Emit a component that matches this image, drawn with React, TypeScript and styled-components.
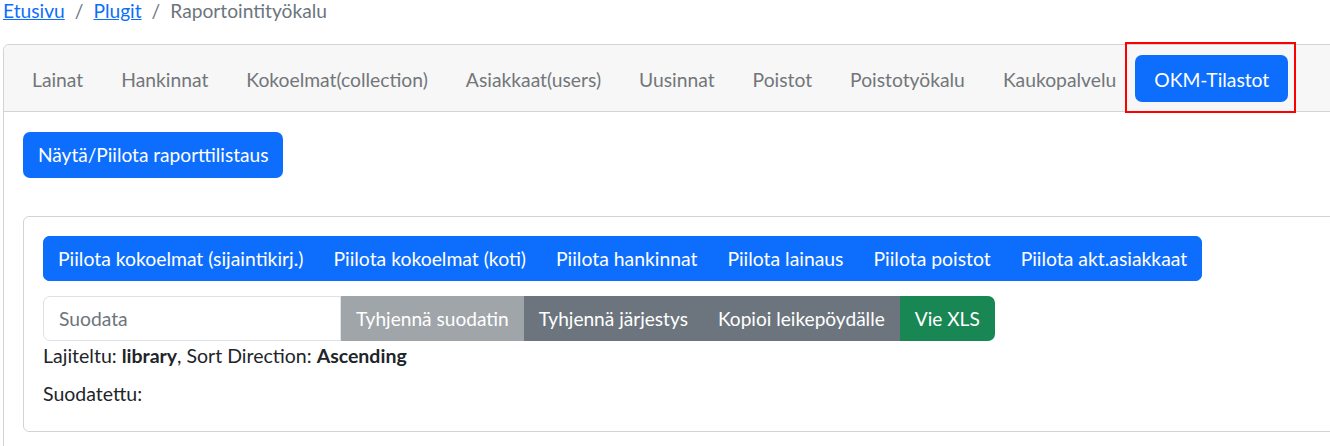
import React from "react";
import styled, { createGlobalStyle, css } from "styled-components";

const GlobalStyle = createGlobalStyle`
  html, body {
    margin: 0;
    padding: 0;
    background: #ffffff;
    overflow: hidden;
  }
  body {
    font-family: Lato, "Noto Sans", sans-serif;
    color: #212529;
  }
  * { box-sizing: border-box; }
`;

const Page = styled.div`
  width: 1420px;
  padding-left: 3px;
`;

const Breadcrumb = styled.ol`
  display: flex;
  list-style: none;
  margin: 0 0 22px;
  padding: 0;
  font-size: 19.2px;
  line-height: 22px;
`;

const Crumb = styled.li<{ $current?: boolean }>`
  color: ${(p) => (p.$current ? "#6c757d" : "inherit")};
  &:not(:first-child)::before {
    content: "/";
    color: #6c757d;
    padding: 0 10px;
  }
`;

const CrumbLink = styled.a`
  color: #0d6efd;
  text-decoration: underline;
`;

const Card = styled.div<{ $inner?: boolean }>`
  border: 1px solid #d3d3d3;
  border-radius: 6px;
  background: #ffffff;
  ${(p) =>
    p.$inner
      ? css`
          margin-top: 38px;
        `
      : css`
          width: 1400px;
        `}
`;

const CardHeader = styled.div`
  background: #f7f7f7;
  border-bottom: 1px solid #d3d3d3;
  border-radius: 6px 6px 0 0;
  padding: 10px 9px 9px;
`;

const Nav = styled.ul`
  display: flex;
  list-style: none;
  margin: 0;
  padding: 0;
`;

const NavLink = styled.li<{ $active?: boolean }>`
  position: relative;
  font-size: 19.3px;
  line-height: 31px;
  padding: 9px 19px 7px;
  border-radius: 7px;
  color: ${(p) => (p.$active ? "#ffffff" : "#72767a")};
  background: ${(p) => (p.$active ? "#0d6efd" : "transparent")};
  white-space: nowrap;
  ${(p) =>
    p.$active &&
    css`
      &::after {
        content: "";
        position: absolute;
        left: -10px;
        right: -8px;
        top: -13px;
        bottom: -11px;
        border: 2px solid #ff0000;
      }
    `}
`;

const CardBody = styled.div<{ $inner?: boolean }>`
  padding: ${(p) => (p.$inner ? "19px 19px 24px" : "20px 19px 19px")};
`;

const ToggleButton = styled.button`
  display: block;
  font-family: inherit;
  font-size: 19.1px;
  line-height: 30px;
  padding: 8px 15px;
  border: none;
  border-radius: 7px;
  background: #0d6efd;
  color: #ffffff;
`;

const ButtonGroup = styled.div`
  display: inline-flex;
  border-radius: 7px;
  overflow: hidden;
  background: #0d6efd;
`;

const GroupButton = styled.button`
  font-family: inherit;
  font-size: 19.35px;
  line-height: 29px;
  padding: 8px 15px;
  border: none;
  background: #0d6efd;
  color: #ffffff;
  white-space: nowrap;
`;

const FilterRow = styled.div`
  display: flex;
  margin-top: 15px;
  height: 45px;
`;

const FilterInput = styled.input`
  width: 298px;
  height: 45px;
  border: 1px solid #dee2e6;
  border-radius: 7px 0 0 7px;
  padding: 0 15px;
  font-family: inherit;
  font-size: 19.3px;
  color: #212529;
  outline: none;
  &::placeholder {
    color: #6c757d;
  }
`;

const variantColors = {
  disabled: "#a0a5aa",
  secondary: "#6c757d",
  success: "#198754",
};

const FilterButton = styled.button<{ $variant: keyof typeof variantColors }>`
  font-family: inherit;
  font-size: 19.1px;
  line-height: 45px;
  padding: 0 15px;
  border: none;
  background: ${(p) => variantColors[p.$variant]};
  color: #ffffff;
  white-space: nowrap;
  &:last-child {
    border-radius: 0 7px 7px 0;
  }
`;

const InfoLine = styled.p<{ $gap: number }>`
  margin: ${(p) => p.$gap}px 0 0;
  font-size: 19.5px;
  line-height: 26px;
  b {
    font-weight: 700;
  }
`;

const navItems = [
  "Lainat",
  "Hankinnat",
  "Kokoelmat(collection)",
  "Asiakkaat(users)",
  "Uusinnat",
  "Poistot",
  "Poistotyökalu",
  "Kaukopalvelu",
  "OKM-Tilastot",
];

const hideButtons = [
  "Piilota kokoelmat (sijaintikirj.)",
  "Piilota kokoelmat (koti)",
  "Piilota hankinnat",
  "Piilota lainaus",
  "Piilota poistot",
  "Piilota akt.asiakkaat",
];

export default function App() {
  return (
    <>
      <GlobalStyle />
      <Page>
        <Breadcrumb>
          <Crumb>
            <CrumbLink href="#">Etusivu</CrumbLink>
          </Crumb>
          <Crumb>
            <CrumbLink href="#">Plugit</CrumbLink>
          </Crumb>
          <Crumb $current>Raportointityökalu</Crumb>
        </Breadcrumb>
        <Card>
          <CardHeader>
            <Nav>
              {navItems.map((item) => (
                <NavLink key={item} $active={item === "OKM-Tilastot"}>
                  {item}
                </NavLink>
              ))}
            </Nav>
          </CardHeader>
          <CardBody>
            <ToggleButton>Näytä/Piilota raporttilistaus</ToggleButton>
            <Card $inner>
              <CardBody $inner>
                <ButtonGroup>
                  {hideButtons.map((b) => (
                    <GroupButton key={b}>{b}</GroupButton>
                  ))}
                </ButtonGroup>
                <FilterRow>
                  <FilterInput placeholder="Suodata" />
                  <FilterButton $variant="disabled">Tyhjennä suodatin</FilterButton>
                  <FilterButton $variant="secondary">Tyhjennä järjestys</FilterButton>
                  <FilterButton $variant="secondary">Kopioi leikepöydälle</FilterButton>
                  <FilterButton $variant="success">Vie XLS</FilterButton>
                </FilterRow>
                <InfoLine $gap={2}>
                  Lajiteltu: <b>library</b>, Sort Direction: <b>Ascending</b>
                </InfoLine>
                <InfoLine $gap={12}>Suodatettu:</InfoLine>
              </CardBody>
            </Card>
          </CardBody>
        </Card>
      </Page>
    </>
  );
}
